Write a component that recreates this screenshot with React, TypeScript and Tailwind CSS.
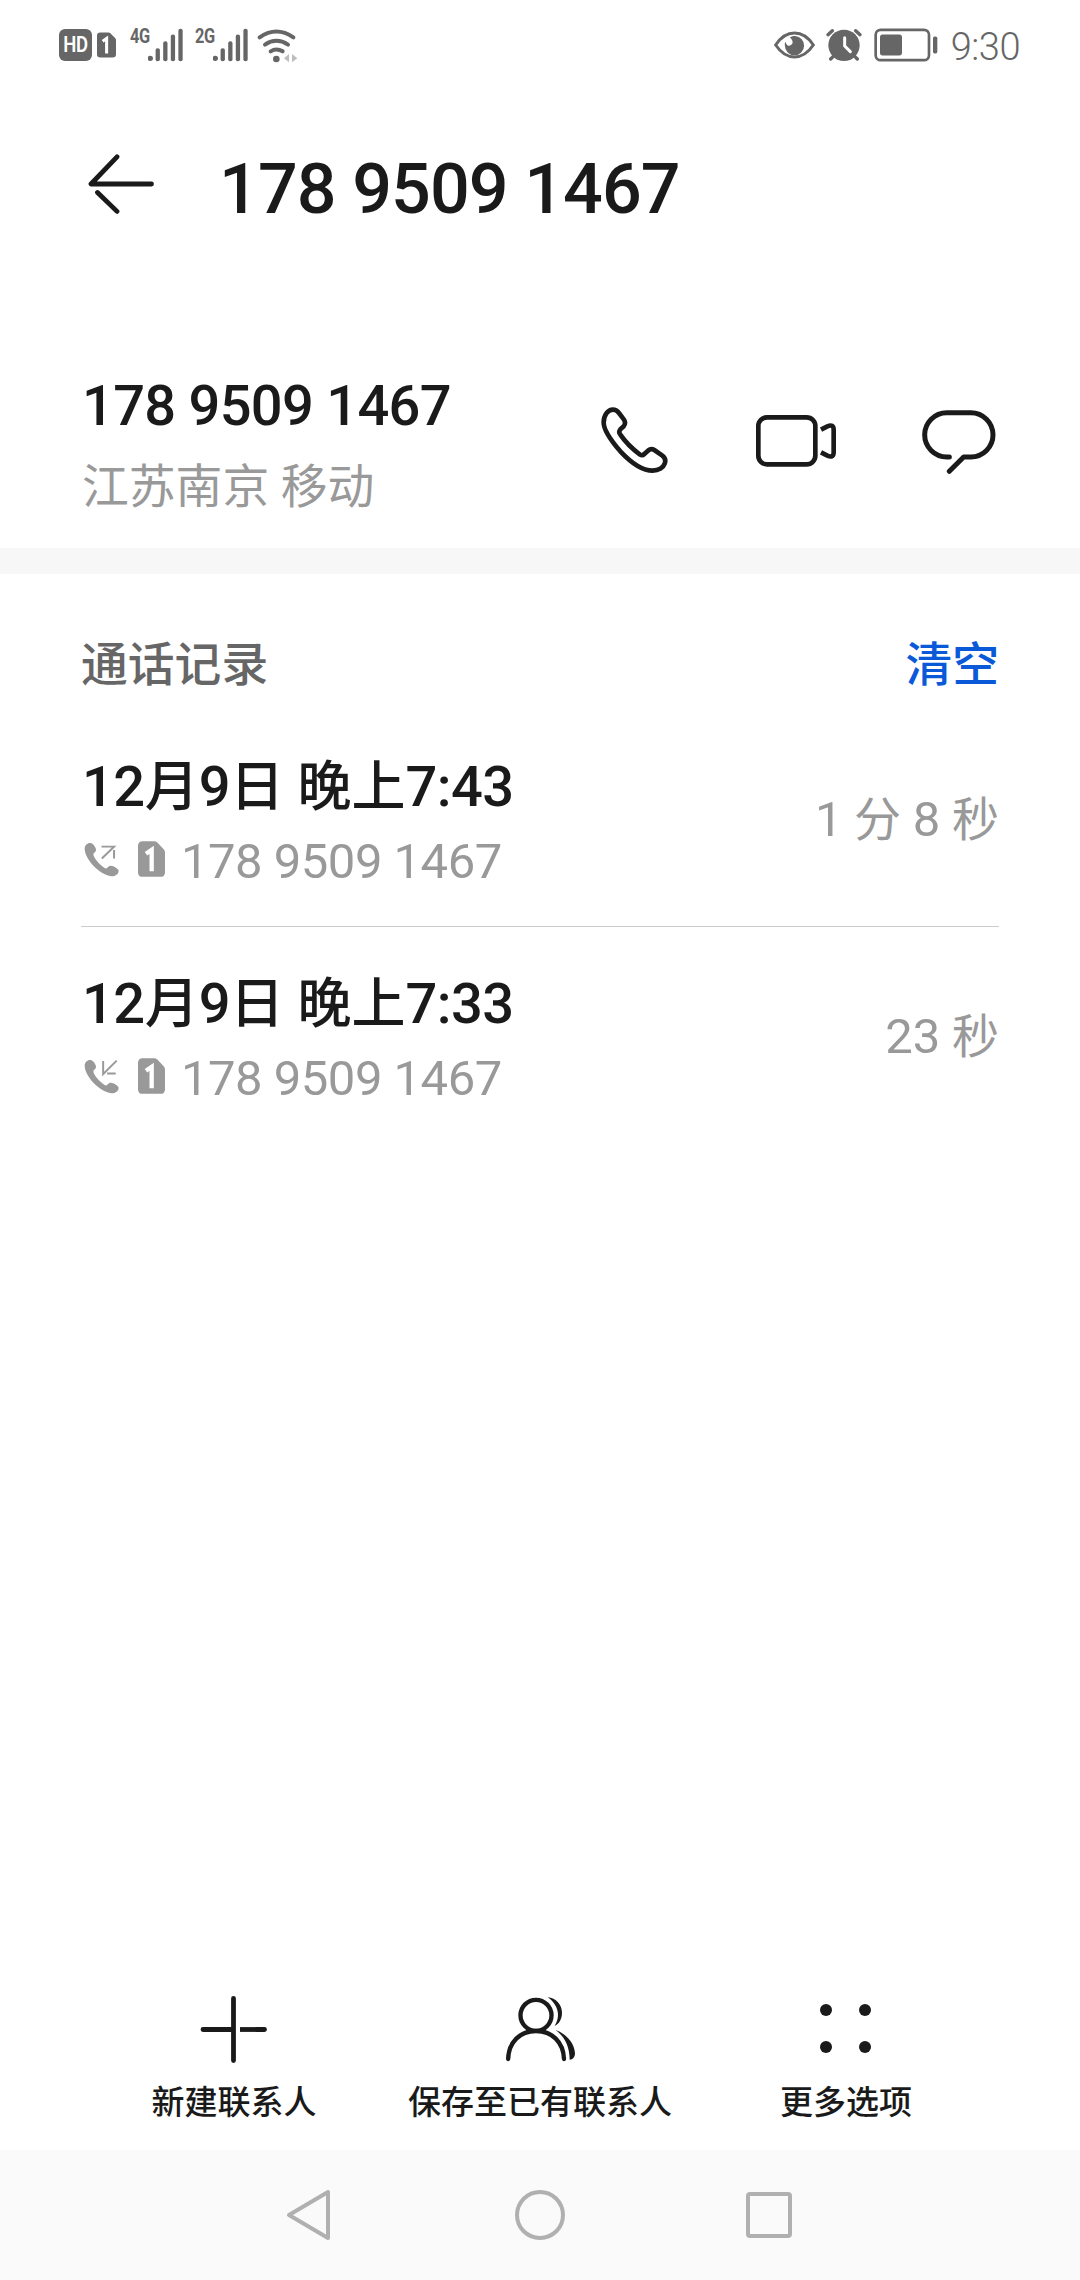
import React from "react";

type CallRecord = {
  date: string;
  number: string;
  duration: string;
  direction: "out" | "in";
};

const PHONE_NUMBER = "178 9509 1467";

const records: CallRecord[] = [
  { date: "12月9日 晚上7:43", number: PHONE_NUMBER, duration: "1 分 8 秒", direction: "out" },
  { date: "12月9日 晚上7:33", number: PHONE_NUMBER, duration: "23 秒", direction: "in" },
];

// digits are set slightly larger than the Chinese characters beside them
const MixedText: React.FC<{ text: string; digitClass: string }> = ({ text, digitClass }) => (
  <>
    {text.split(/([\d:]+)/).map((part, i) =>
      /[\d:]/.test(part) ? (
        <span key={i} className={digitClass}>
          {part}
        </span>
      ) : (
        part
      )
    )}
  </>
);

/* STATUS BAR ICONS */

const SimIcon: React.FC<{ className?: string }> = ({ className }) => (
  <svg viewBox="0 0 81 107" className={className}>
    <path
      d="M14 0H48Q54 0 58 4L77 24Q81 28 81 34V93Q81 107 67 107H14Q0 107 0 93V14Q0 0 14 0Z"
      fill="currentColor"
    />
    <path d="M24 38L41 26V90" fill="none" stroke="#fff" strokeWidth="13" />
  </svg>
);

const NetworkLabel: React.FC<{ text: string }> = ({ text }) => (
  <span className="mb-[18px] w-[18px] origin-left scale-x-[0.78] text-[21px] leading-[16px] font-bold tracking-[-0.5px]">
    {text}
  </span>
);

const SignalIcon = () => (
  <svg viewBox="324 53 106 101" className="h-[34px] w-[35px]" fill="currentColor">
    <circle cx="331" cy="144" r="8" />
    <rect x="347" y="113" width="13" height="40" rx="6" />
    <rect x="370" y="92" width="13" height="61" rx="6" />
    <rect x="393" y="72" width="13" height="81" rx="6" />
    <rect x="416" y="54" width="13" height="99" rx="6" />
  </svg>
);

const WifiIcon = () => (
  <svg viewBox="654 50 123 105" className="h-[35px] w-[41px]" fill="none" stroke="currentColor" strokeWidth="12" strokeLinecap="round">
    <path d="M662 78Q712 43 763 78" />
    <path d="M678 100Q712 77 747 100" />
    <path d="M695 120Q712 109 731 120" />
    <circle cx="712" cy="143" r="10" fill="currentColor" stroke="none" />
    <path d="M750 128V153L735 141ZM759 128V153L775 141Z" fill="#bdbdbd" stroke="none" />
  </svg>
);

const EyeIcon = () => (
  <svg viewBox="69 64 124 84" className="h-[28px] w-[41px]">
    <path d="M74 106Q98 70 131 70T188 106Q164 142 131 142T74 106Z" fill="none" stroke="currentColor" strokeWidth="9" />
    <path
      d="M133 79A29 29 0 0 1 160 108A29 29 0 0 1 102 108C101 103 102 99 104 97C106 105 110 109 115 108C127 105 130 94 117 83C122 80 128 79 133 79Z"
      fill="currentColor"
    />
  </svg>
);

const AlarmIcon = () => (
  <svg viewBox="226 56 108 102" className="h-[34px] w-[36px]" fill="none" stroke="currentColor" strokeWidth="10" strokeLinecap="round">
    <circle cx="280" cy="108" r="47" fill="currentColor" stroke="none" />
    <path d="M232 76L245 64M315 64L328 76M248 141L240 149M312 141L320 149" />
    <path d="M282 85V110L299 127" stroke="#fff" strokeWidth="9" strokeLinejoin="round" />
  </svg>
);

const BatteryIcon = () => (
  <svg viewBox="371 56 192 101" className="h-[34px] w-[64px]" fill="currentColor">
    <rect x="376" y="61" width="160" height="91" rx="15" fill="none" stroke="currentColor" strokeWidth="8" />
    <rect x="389" y="75" width="66" height="63" rx="8" />
    <rect x="548" y="81" width="13" height="51" rx="5" />
  </svg>
);

/* ACTION ICONS */

const BackIcon = () => (
  <svg viewBox="0 0 66 60" className="h-[60px] w-[66px]" fill="none" stroke="currentColor" strokeWidth="4.8" strokeLinecap="round" strokeLinejoin="round">
    <path d="M29 2.8L3 30H63.5" />
    <path d="M9.5 38.5L29 57.4" />
  </svg>
);

const PhoneIcon = () => (
  <svg viewBox="62 50 201 201" className="h-[67px] w-[67px]" fill="none" stroke="currentColor" strokeWidth="14">
    <path d="M70 97C70 75 82 58 98 58C106 58 111 62 116 68L131 88C135 95 135 102 130 108L120 117C116 122 116 128 120 133C135 155 155 175 178 192C184 196 188 195 192 191L203 181C209 176 217 176 222 179L246 196C254 202 257 210 253 220C249 231 236 241 217 241C185 241 150 215 120 183C90 148 70 120 70 97Z" />
  </svg>
);

const VideoIcon = () => (
  <svg viewBox="528 72 240 156" className="h-[52px] w-[80px]" fill="none" stroke="currentColor" strokeWidth="14">
    <rect x="535" y="79" width="171" height="141" rx="26" />
    <path d="M723 116L742 106Q761 98 761 116V184Q761 202 742 194L723 184" />
  </svg>
);

const MessageIcon = () => (
  <svg viewBox="1024 59 222 192" className="h-[64px] w-[74px]" fill="none" stroke="currentColor" strokeWidth="15" strokeLinecap="round" strokeLinejoin="round">
    <path d="M1106 200H1098.5A66.5 66.5 0 0 1 1098.5 67H1170.5A66.5 66.5 0 0 1 1170.5 200H1149L1106 243" />
  </svg>
);

const CallDirectionIcon: React.FC<{ direction: CallRecord["direction"] }> = ({ direction }) => (
  <svg viewBox="72 658 106 106" className="h-[35px] w-[35px]">
    <path
      d="M74 678C74 666 86 658 95 662C103 666 112 681 107 687C103 692 99 692 101 699C106 712 122 730 137 738C143 740 145 730 153 730C163 730 177 740 177 746C177 755 166 763 155 762C118 757 74 710 74 678Z"
      fill="currentColor"
    />
    {direction === "out" ? (
      <path d="M125 672H163L126 708M163 682V708" fill="none" stroke="currentColor" strokeWidth="6" />
    ) : (
      <path d="M130 664V704L171 663M142 702H168" fill="none" stroke="currentColor" strokeWidth="6" />
    )}
  </svg>
);

/* BOTTOM TOOLBAR ICONS */

const PlusIcon = () => (
  <svg viewBox="0 0 70 70" className="h-[70px] w-[70px]" fill="none" stroke="currentColor" strokeWidth="4.8" strokeLinecap="round">
    <path d="M34.5 4.500V66.500M4 35.500H34" />
    <path d="M41 35.500H60" strokeLinecap="butt" />
    <path d="M58 35.500H65.500" />
  </svg>
);

const ContactsIcon = () => (
  <svg viewBox="75 41 210 210" className="h-[70px] w-[70px]" fill="currentColor">
    <circle cx="168" cy="105" r="46.5" fill="none" stroke="currentColor" strokeWidth="13" />
    <path d="M84.5 236C86 185 120 152 168 152S250 185 252 236" fill="none" stroke="currentColor" strokeWidth="13" strokeLinecap="round" />
    <path d="M203 51C228 53 246 74 246 97C246 115 238 130 224 137C231 124 234 115 234 103C234 82 220 62 203 51Z" />
    <path d="M227 149C262 162 283 190 285 218C285 230 279 238 269 238C269 200 255 170 227 149Z" />
  </svg>
);

const MoreIcon = () => (
  <svg viewBox="0 0 70 70" className="h-[70px] w-[70px]" fill="currentColor">
    <circle cx="15" cy="16" r="6" />
    <circle cx="54" cy="16" r="6" />
    <circle cx="15" cy="53" r="6" />
    <circle cx="54" cy="53" r="6" />
  </svg>
);

const tools = [
  { label: "新建联系人", icon: <PlusIcon /> },
  { label: "保存至已有联系人", icon: <ContactsIcon /> },
  { label: "更多选项", icon: <MoreIcon /> },
];

const App: React.FC = () => {
  return (
    <div className="flex h-[2280px] w-[1080px] flex-col overflow-hidden bg-white font-['Roboto','Noto_Sans_CJK_SC',sans-serif] text-[#1a1a1a]">
      {/* STATUS BAR */}
      <div className="flex h-[90px] shrink-0 items-center pr-[60px] pl-[59px] text-[#666]">
        <div className="flex h-[32px] w-[33px] items-center justify-center rounded-[6px] bg-[#666] text-white">
          <span className="scale-x-[0.84] text-[22px] leading-[32px] font-semibold tracking-[-0.5px]">HD</span>
        </div>
        <SimIcon className="ml-[5px] h-[26px] w-[19px]" />
        <span className="ml-[14px] flex items-center">
          <NetworkLabel text="4G" />
          <SignalIcon />
        </span>
        <span className="ml-[12px] flex items-center">
          <NetworkLabel text="2G" />
          <SignalIcon />
        </span>
        <span className="ml-[9px]">
          <WifiIcon />
        </span>
        <div className="ml-auto flex items-center">
          <EyeIcon />
          <span className="ml-[11px]">
            <AlarmIcon />
          </span>
          <span className="ml-[12px]">
            <BatteryIcon />
          </span>
          <span className="ml-[13px] pt-[4px] text-[38px] leading-[44px] font-light tracking-[-0.5px]">9:30</span>
        </div>
      </div>

      {/* HEADER */}
      <header className="flex h-[188px] shrink-0 items-center pl-[88px]">
        <BackIcon />
        <h1 className="ml-[65px] pt-[9px] text-[70px] leading-[82px] font-medium tracking-[-0.9px]">{PHONE_NUMBER}</h1>
      </header>

      {/* NUMBER AND ACTIONS */}
      <section className="flex h-[270px] shrink-0 items-start justify-between pr-[84px] pl-[82px]">
        <div className="pt-[95px]">
          <p className="text-[56px] leading-[66px] font-medium tracking-[-0.7px]">{PHONE_NUMBER}</p>
          <p className="mt-[14px] text-[46.8px] leading-[68px] text-[#999]">江苏南京 移动</p>
        </div>
        <div className="flex items-center pt-[129px]">
          <PhoneIcon />
          <span className="ml-[88px]">
            <VideoIcon />
          </span>
          <span className="ml-[86px] pt-[3px]">
            <MessageIcon />
          </span>
        </div>
      </section>
      <div className="h-[26px] shrink-0 bg-[#f7f7f7]" />

      {/* CALL LOG */}
      <section className="flex-1 px-[81px]">
        <div className="flex h-[136px] items-center justify-between pt-[45px] text-[46.8px] leading-[68px] font-medium">
          <h2 className="text-[#666]">通话记录</h2>
          <button className="text-[#0a59d9]">清空</button>
        </div>
        {records.map((record) => (
          <div
            key={record.date}
            className="flex h-[217px] items-start justify-between border-b border-[#ccc] last:border-b-0"
          >
            <div className="pt-[38px]">
              <p className="ml-px text-[54px] leading-[78px] font-medium">
                <MixedText text={record.date} digitClass="text-[56px] tracking-[-0.5px]" />
              </p>
              <div className="flex h-[64px] items-center text-[#999]">
                <span className="ml-[3px]">
                  <CallDirectionIcon direction={record.direction} />
                </span>
                <SimIcon className="ml-[19px] h-[36px] w-[27px]" />
                <span className="ml-[16px] pt-[5px] text-[49px] leading-[58px] tracking-[-0.5px]">{record.number}</span>
              </div>
            </div>
            <span className="pt-[76px] text-[47px] leading-[68px] text-[#999]">
              <MixedText text={record.duration} digitClass="text-[49px]" />
            </span>
          </div>
        ))}
      </section>

      {/* TOOLBAR */}
      <footer className="grid h-[156px] shrink-0 grid-cols-3 px-[81px]">
        {tools.map((tool) => (
          <div key={tool.label} className="flex flex-col items-center">
            {tool.icon}
            <span className="mt-[15px] text-[33px] leading-[48px] font-medium">{tool.label}</span>
          </div>
        ))}
      </footer>

      {/* SYSTEM NAVIGATION */}
      <nav className="flex h-[130px] shrink-0 items-center bg-[#fafafa] pl-[286px] text-[#b0b0b0]">
        <svg viewBox="0 0 45 52" className="h-[52px] w-[45px]" fill="none" stroke="currentColor" strokeWidth="4" strokeLinejoin="round">
          <path d="M42 3V49L3 26Z" />
        </svg>
        <div className="ml-[184px] h-[50px] w-[50px] rounded-full border-4 border-[#b0b0b0]" />
        <div className="ml-[181px] h-[46px] w-[46px] rounded-[4px] border-4 border-[#b0b0b0]" />
      </nav>
    </div>
  );
};

export default App;
